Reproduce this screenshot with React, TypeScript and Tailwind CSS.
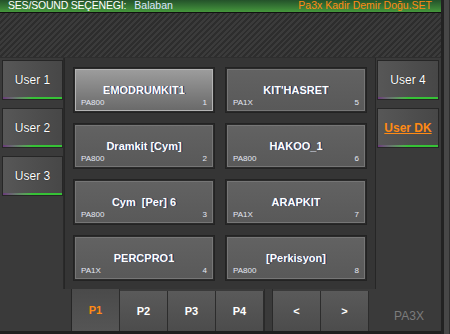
const kits = [
  { name: "EMODRUMKIT1", src: "PA800", n: 1, active: true },
  { name: "KIT'HASRET", src: "PA1X", n: 5 },
  { name: "Dramkit [Cym]", src: "PA800", n: 2 },
  { name: "HAKOO_1", src: "PA800", n: 6 },
  { name: "Cym  [Per] 6", src: "PA800", n: 3 },
  { name: "ARAPKIT", src: "PA1X", n: 7 },
  { name: "PERCPRO1", src: "PA1X", n: 4 },
  { name: "[Perkisyon]", src: "PA800", n: 8 },
];

const UserButton = ({ label, accent }: { label: string; accent?: boolean }) => (
  <div className="relative h-[40px] border border-[#262626] bg-gradient-to-r from-[#575757] to-[#474747] flex items-center justify-center">
    <span
      className={
        accent
          ? "text-[12px] font-bold text-[#ff8a14] underline"
          : "text-[12px] text-white [text-shadow:0_0_1px_#000]"
      }
    >
      {label}
    </span>
    <div className="absolute left-0 right-0 bottom-0 h-[2px] bg-gradient-to-r from-[#6a3a7a] via-[#36c236] to-[#36c236]" />
  </div>
);

const KitButton = ({ name, src, n, active }: { name: string; src: string; n: number; active?: boolean }) => (
  <div className="h-[46px] border border-[#232323] p-px bg-[#2a2a2a]">
    <div
      className={
        "h-full flex flex-col border " +
        (active
          ? "border-[#b4b4b4] bg-gradient-to-b from-[#9c9c9c] to-[#6a6a6a]"
          : "border-[#767676] bg-gradient-to-b from-[#626262] to-[#595959]")
      }
    >
      <div className="flex-1 flex items-end justify-center pb-[1px]">
        <span className="text-[11px] font-bold text-white leading-[14px] whitespace-pre [text-shadow:1px_0_0_#1b2a5a]">
          {name}
        </span>
      </div>
      <div className="flex justify-between px-[5px] pb-[2px] text-[8px] leading-[10px] text-[#e4e8f4]">
        <span>{src}</span>
        <span>{n}</span>
      </div>
    </div>
  </div>
);

const Tab = ({ label, active }: { label: string; active?: boolean }) => (
  <div
    className={
      "w-[48px] border-r border-[#2c2c2c] flex items-center justify-center text-[11px] font-bold bg-gradient-to-b " +
      (active ? "from-[#4a4a4a] to-[#555555] text-[#ff8a14] h-[42px]" : "from-[#5a5a5a] to-[#4c4c4c] text-white h-[40px] mt-[2px]")
    }
  >
    {label}
  </div>
);

export default function App() {
  return (
    <div className="w-[450px] h-[334px] flex bg-[#3a3a3a] overflow-hidden font-['Liberation_Sans',Arial,sans-serif]">
      <div className="w-[441px] flex flex-col">
        <div className="h-[12px] bg-gradient-to-b from-[#24522a] to-[#46983c] flex justify-between pl-[8px] pr-[9px] text-[10.5px] leading-[11px] border-b border-[#101010] box-content">
          <span className="text-white whitespace-pre tracking-[-0.2px]">
            SES/SOUND SEÇENEGI:{"   "}<span className="text-[#dde6ff] tracking-normal">Balaban</span>
          </span>
          <span className="text-[#ff8a14]">Pa3x Kadir Demir Doğu.SET</span>
        </div>
        <div className="h-[45px] bg-[repeating-linear-gradient(135deg,#3b3b3b_0px,#3b3b3b_2px,#2d2d2d_2px,#2d2d2d_4px)] border-b border-[#2e2e2e]" />

        <div className="flex h-[232px]">
          <div className="w-[64px] border-r border-[#2a2a2a] flex flex-col gap-[8px] pt-[2px] pl-[2px]">
            <UserButton label="User 1" />
            <UserButton label="User 2" />
            <UserButton label="User 3" />
          </div>
          <div className="w-[312px] bg-[#353535] border-x border-[#262626] grid grid-cols-2 gap-x-[10px] gap-y-[10px] content-start pt-[9px] pl-[8px] pr-[8px]">
            {kits.map((k) => (
              <KitButton key={k.n} {...k} />
            ))}
          </div>
          <div className="w-[64px] flex flex-col gap-[8px] pt-[2px] pl-[1px] pr-[1px]">
            <UserButton label="User 4" />
            <UserButton label="User DK" accent />
          </div>
        </div>

        <div className="flex flex-1 border-b-[3px] border-[#1e1e1e]">
          <div className="w-[72px] border-r border-[#262626]" />
          <div className="flex border-r border-[#2a2a2a]">
            <Tab label="P1" active />
            <Tab label="P2" />
            <Tab label="P3" />
            <Tab label="P4" />
          </div>
          <div className="w-[8px] bg-[#3a3a3a] border-r border-[#2a2a2a]" />
          <div className="flex">
            <Tab label="<" />
            <Tab label=">" />
          </div>
          <div className="flex-1 flex items-end justify-center pb-[6px] pl-[8px] text-[12px] text-[#7c7c7c]">PA3X</div>
        </div>
      </div>
      <div className="w-[9px] border-l-[3px] border-[#222222] bg-[#474747] border-r border-r-[#2e2e2e]" />
    </div>
  );
}
